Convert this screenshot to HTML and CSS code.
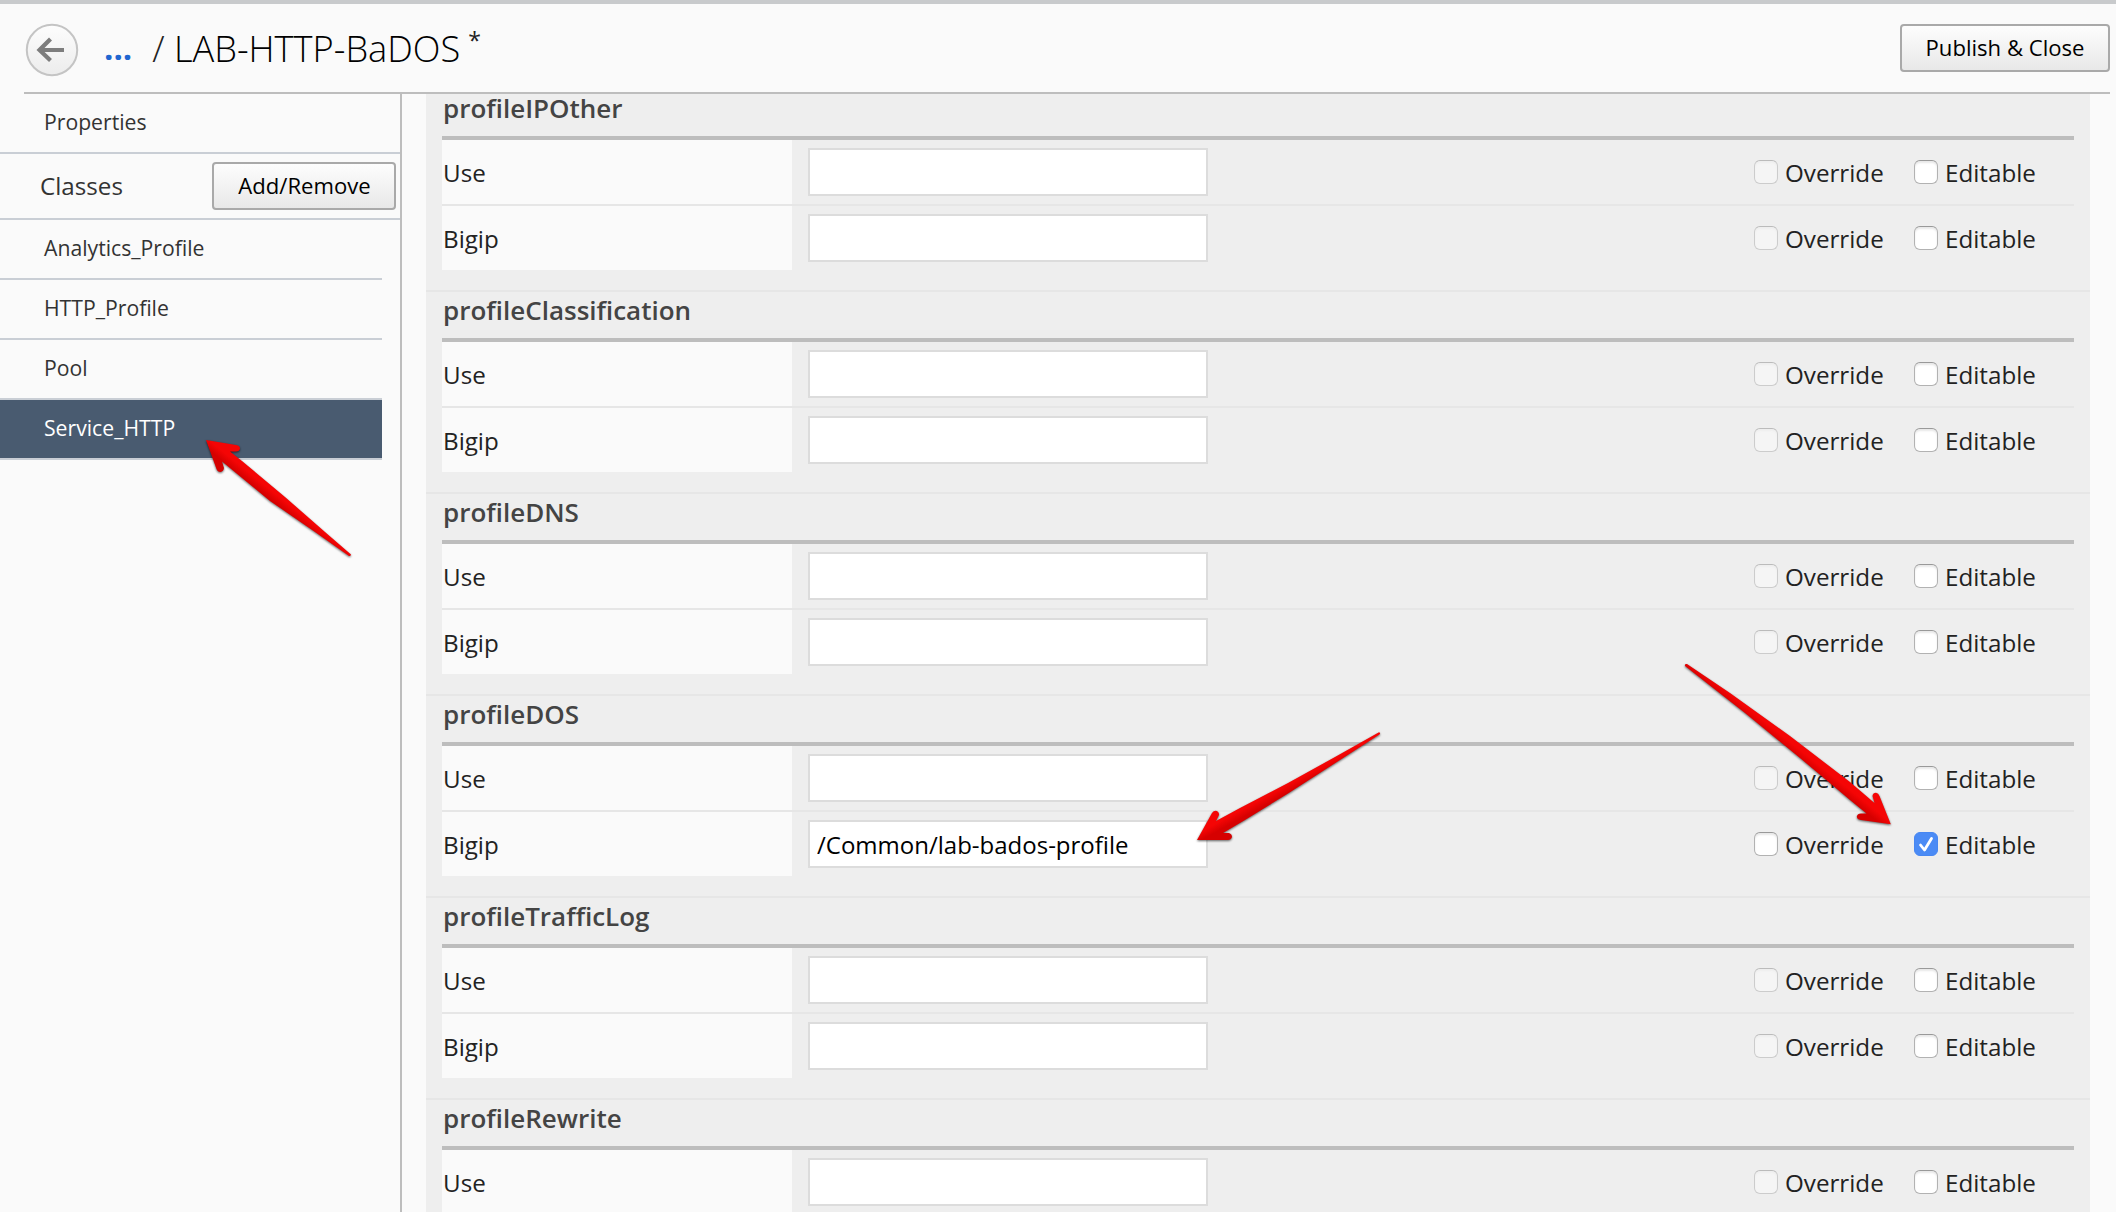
FILE: index.html
```
<!DOCTYPE html>
<html lang="en">
<head>
<meta charset="utf-8">
<title>LAB-HTTP-BaDOS</title>
<link rel="stylesheet" href="styles.css">
</head>
<body>
<div class="app">
  <header class="header">
    <button class="back" aria-label="Back">
      <svg width="54" height="54" viewBox="0 0 54 54">
        <defs><linearGradient id="back-fill" x1="0" y1="0" x2="0" y2="1"><stop offset="0" stop-color="#fdfdfd"/><stop offset="1" stop-color="#ececec"/></linearGradient></defs>
        <circle cx="27" cy="27" r="25.2" fill="url(#back-fill)" stroke="#c4c4c4" stroke-width="2"/>
        <path d="M39 27H15M25.5 16L14.5 27L25.5 37.500" fill="none" stroke="#7d7d7d" stroke-width="4.200"/>
      </svg>
    </button>
    <a class="crumb">...</a>
    <h1 class="title"><span class="slash">/</span> LAB-HTTP-BaDOS</h1>
    <span class="dirty">*</span>
    <button class="btn publish">Publish &amp; Close</button>
  </header>
  <div class="body">
    <nav class="sidebar">
      <div class="nav-item nav-wide">Properties</div>
      <div class="classes"><span>Classes</span><button class="btn add">Add/Remove</button></div>
      <div class="nav-item">Analytics_Profile</div>
      <div class="nav-item">HTTP_Profile</div>
      <div class="nav-item">Pool</div>
      <div class="nav-item active">Service_HTTP</div>
    </nav>
    <main class="panel" id="panel"></main>
  </div>
  <svg class="annotations" width="2116" height="1212" viewBox="0 0 2116 1212">
    <defs>
      <linearGradient id="red-a" gradientUnits="userSpaceOnUse" x1="276" y1="507" x2="284" y2="497"><stop offset="0.2" stop-color="#d60000"/><stop offset="0.8" stop-color="#f50505"/></linearGradient>
      <linearGradient id="red-b" gradientUnits="userSpaceOnUse" x1="1285" y1="783" x2="1291" y2="794"><stop offset="0.2" stop-color="#f50505"/><stop offset="0.8" stop-color="#d60000"/></linearGradient>
      <linearGradient id="red-c" gradientUnits="userSpaceOnUse" x1="1784" y1="750" x2="1792" y2="740"><stop offset="0.2" stop-color="#d60000"/><stop offset="0.8" stop-color="#f50505"/></linearGradient>
    </defs>
    <path fill="url(#red-a)" d="M206 440L236 445Q240 445.500 240 448.500Q239.500 451.500 236 451.500L230 451.500L242 461L285 497L325 532L351 554.500Q350.500 556.500 349 556L315 532L270 501L236 473L222 461.500L224 468Q223.500 471.500 220.500 472Q217.500 472 216.500 469Z"/>
    <path fill="url(#red-b)" d="M1197 840L1212 813Q1214 810 1217 811Q1219.500 812.500 1219 815L1216 821L1240 808L1288 783L1335 757L1379 732.200Q1381 733 1379.500 734.500L1340 760L1288 793.500L1245 820L1223 833L1229 833Q1232 834 1232 837Q1231 840 1228 840Z"/>
    <path fill="url(#red-c)" d="M1890.800 824.200L1861 820Q1857 819.500 1856.800 816.500Q1857.500 813.500 1861 813.500L1866.500 813.500L1850 800L1800 758L1745 713L1685 666Q1684.500 663.500 1687 664L1730 693L1790 736L1850 782L1874.500 803L1872.500 796Q1873 792.800 1876 792.800Q1878.500 793 1879.500 796Z"/>
  </svg>
</div>
<script src="profiles.js"></script>
</body>
</html>
```
FILE: styles.css
```
* { box-sizing: border-box; }
body {
  margin: 0;
  background: #fafafa;
  color: #222;
  font: 24px/36px "Open Sans", sans-serif;
}
.app {
  position: relative;
  display: flex;
  flex-direction: column;
  height: 1212px;
  overflow: hidden;
  border-top: 4px solid #c8cacc;
}
.header {
  display: flex;
  flex: none;
  height: 90px;
  margin: 0 6px 0 24px;
  padding-top: 20px;
  align-items: flex-start;
  border-bottom: 2px solid #bdbdbd;
}
.back {
  width: 54px;
  height: 52px;
  margin-left: 1px;
  padding: 0;
  border: 0;
  background: none;
}
.back svg { display: block; margin-top: -1px; }
.crumb {
  margin-left: 25px;
  font-size: 33px;
  font-weight: 700;
  line-height: 48px;
  color: #1f66d0;
}
.title {
  margin: 0 0 0 20px;
  font-size: 36.2px;
  font-weight: 300;
  line-height: 48px;
  color: #000;
  white-space: pre;
}
.slash { color: #222; }
.dirty { margin-left: 8px; font-size: 23px; line-height: 33px; }
.btn {
  height: 48px;
  padding: 0 0 3px;
  border: 2px solid #a9a9a9;
  border-radius: 4px;
  background: linear-gradient(#fdfdfd, #e8e8e8);
  color: #000;
  font: 22.1px/40px "Open Sans", sans-serif;
  text-align: center;
}
.publish { width: 210px; margin-left: auto; }
.add { width: 184px; padding-left: 1px; }
.body { display: flex; flex: 1; min-height: 0; }
.sidebar {
  width: 402px;
  flex: none;
  border-right: 2px solid #bdbdbd;
  color: #333;
}
.nav-item {
  width: 382px;
  height: 60px;
  padding: 0 0 3px 44px;
  border-bottom: 2px solid #c9ced5;
  font-size: 21.2px;
  line-height: 55px;
}
.nav-wide { width: auto; }
.active { background: #495b70; color: #fff; }
.classes {
  display: flex;
  justify-content: space-between;
  align-items: center;
  height: 66px;
  padding: 0 4px 0 40px;
  border-bottom: 2px solid #c9ced5;
  font-size: 24.2px;
  line-height: 38px;
}
.panel {
  width: 1664px;
  margin-left: 24px;
  background: #eee;
  overflow: hidden;
}
.section {
  height: 202px;
  padding: 0 16px;
  border-bottom: 2px solid #e6e6e6;
}
.section:first-child { margin-top: -4px; }
.section h2 {
  height: 50px;
  margin: 0;
  border-bottom: 4px solid #bdbdbd;
  font-size: 26px;
  font-weight: 600;
  line-height: 36px;
  text-indent: 1px;
  color: #444;
}
.row {
  display: grid;
  grid-template-columns: 350px 400px 1fr 160px 160px;
  grid-template-rows: 64px;
  align-items: center;
  height: 64px;
  font-size: 24.2px;
}
.row + .row { height: 66px; border-top: 2px solid #e6e6e6; }
.label { height: 64px; padding-left: 1px; background: #fafafa; line-height: 65px; }
.field {
  width: 400px;
  height: 48px;
  margin-left: 16px;
  padding: 1px 7px 0;
  border: 2px solid #dcdcdc;
  border-radius: 0;
  background: #fff;
  color: #000;
  font: 24px/44px "Open Sans", sans-serif;
}
.check { display: flex; gap: 7px; height: 64px; line-height: 65px; }
.box {
  width: 24px;
  height: 24px;
  margin-top: 20px;
  flex: none;
  border: 1.5px solid #b2b2b2;
  border-top-color: #999;
  border-radius: 6px;
  background: #fff;
  box-shadow: inset 0 2px 2px #e8e8e8;
}
.box.disabled { background: #f5f5f5; border-color: #ccc; border-top-color: #bbb; box-shadow: inset 0 2px 2px #eee; }
.box.checked { border-color: #4787f2; background: #4b8bf5; box-shadow: none; }
.box svg { display: block; margin: -1px; }
.annotations {
  position: absolute;
  top: -4px;
  left: 0;
  filter: drop-shadow(0 1px 0.8px rgba(0, 0, 0, 0.6));
}
```
FILE: profiles.js
```
const names = ["profileIPOther", "profileClassification", "profileDNS", "profileDOS", "profileTrafficLog", "profileRewrite"];
const tick = '<svg width="24" height="24" viewBox="0 0 24 24"><path d="M6.500 13L10.500 18L17.500 6.500" fill="none" stroke="#fff" stroke-width="2.800" stroke-linecap="round" stroke-linejoin="round"/></svg>';

function row(label, set) {
  return `<div class="row"><div class="label">${label}</div>
    <input class="field" value="${set ? "/Common/lab-bados-profile" : ""}"><span></span>
    <div class="check"><span class="box ${set ? "" : "disabled"}"></span>Override</div>
    <div class="check"><span class="box ${set ? "checked" : ""}">${set ? tick : ""}</span>Editable</div></div>`;
}

// The last profile only shows its first row within the viewport.
document.getElementById("panel").innerHTML = names.map((name, i) =>
  `<section class="section"><h2>${name}</h2>${row("Use", false)}${i < names.length - 1 ? row("Bigip", name === "profileDOS") : ""}</section>`
).join("");
```
